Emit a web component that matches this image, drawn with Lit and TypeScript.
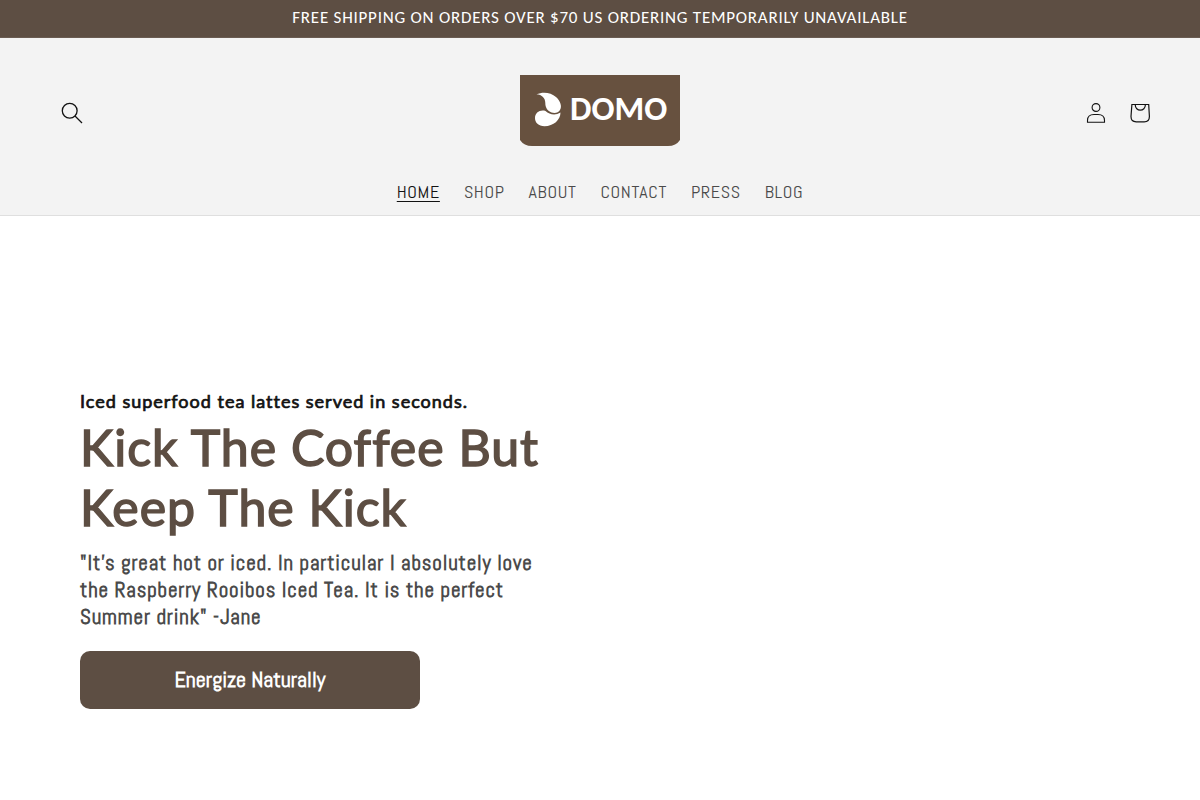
import { LitElement, html, css } from "lit";
import { customElement } from "lit/decorators.js";
import { classMap } from "lit/directives/class-map.js";

const LINKS = ["HOME", "SHOP", "ABOUT", "CONTACT", "PRESS", "BLOG"];

@customElement("app-root")
export class AppRoot extends LitElement {
  static styles = css`
    :host {
      display: block;
      min-height: 100vh;
      background: #fff;
      color: #121212;
      font-family: Abel, "Roboto Condensed", sans-serif;
    }
    .announcement {
      padding: 7px 20px 9px;
      border-bottom: 1px solid #6a5c52;
      background: #5d4e43;
      color: #fff;
      text-align: center;
    }
    .announcement-text {
      margin: 0;
      font: 400 17px/21px Carlito, Lato, sans-serif;
      letter-spacing: 0.045em;
    }
    .header {
      display: grid;
      grid-template-columns: 1fr auto 1fr;
      align-items: center;
      padding: 37px 38px 5px 50px;
      border-bottom: 1px solid #dfdfdf;
      background: #f3f3f3;
    }
    .icon-button {
      display: flex;
      align-items: center;
      justify-content: center;
      width: 44px;
      height: 44px;
      padding: 0;
      border: 0;
      background: none;
      color: #121212;
    }
    .tools {
      display: flex;
      justify-content: flex-end;
    }
    .search {
      display: flex;
    }
    .logo {
      display: block;
      margin-left: -12px;
      padding-bottom: 5px;
    }
    .logo svg {
      display: block;
    }
    .nav {
      grid-column: 1 / -1;
      margin-top: 22px;
      margin-left: -12px;
    }
    .links {
      display: flex;
      flex-wrap: wrap;
      justify-content: center;
      gap: 24px;
      margin: 0;
      padding: 7px 0;
      list-style: none;
    }
    .link {
      display: block;
      color: #4a4a4a;
      font-size: 18px;
      line-height: 23px;
      letter-spacing: 0.035em;
      text-decoration: none;
    }
    .current {
      color: #121212;
      text-decoration: underline;
      text-underline-offset: 3px;
    }
    .hero {
      padding: 173px 80px 80px;
    }
    .hero-box {
      max-width: 480px;
    }
    .kicker {
      margin: 0;
      font: 400 18px/24px Lato, sans-serif;
      letter-spacing: 1px;
      -webkit-text-stroke: 0.04em currentColor;
    }
    .title {
      margin: 4px 0 12px;
      color: #5d4e43;
      font: 400 50px/60px Lato, sans-serif;
      letter-spacing: 1px;
      -webkit-text-stroke: 0.03em currentColor;
    }
    .quote {
      margin: 0 0 21px;
      color: #4a4a4a;
      font-size: 21px;
      font-weight: 700;
      line-height: 27px;
      letter-spacing: 0.04em;
    }
    .cta {
      display: block;
      max-width: 340px;
      padding: 14px 0 16px;
      border-radius: 10px;
      background: #5d4e43;
      color: #fff;
      font-size: 22px;
      font-weight: 700;
      line-height: 28px;
      text-align: center;
      text-decoration: none;
    }
  `;

  render() {
    return html`
      <div class="announcement" role="region" aria-label="Announcement">
        <p class="announcement-text">FREE SHIPPING ON ORDERS OVER $70 US ORDERING TEMPORARILY UNAVAILABLE</p>
      </div>
      <header class="header">
        <div class="search">
          <button class="icon-button" type="button" aria-label="Search">
            <svg width="22" height="22" viewBox="0 0 22 22" fill="none" stroke="currentColor" stroke-width="1.3">
              <circle cx="8.7" cy="8.7" r="7.4" />
              <path d="M14 14l7 7" />
            </svg>
          </button>
        </div>
        <a class="logo" href="#" aria-label="Domo">
          <svg width="160" height="71" viewBox="0 0 160 71">
            <path d="M0 0h160v65q-4 6-12 6H12Q4 71 0 65z" fill="#67513f" />
            <path d="M16.500 19.300C23 16.500 31 17.500 36 22C40.500 26 42.200 31.500 40 35C38.500 38 34.500 38.500 31.500 37.500C27.500 36 25.300 32.500 25.300 28C25.300 23 22 19.800 16.500 19.300z" fill="#fff" />
            <path d="M25.500 36C29.500 39.800 35.500 40.800 40.500 37.600C40.500 45 33.500 51.300 24.500 51.300C18.500 51.300 15 47.500 15 43.300C15 37.500 20 34.500 25.500 36z" fill="#fff" />
            <text x="50" y="45" fill="#fff" font-family="Carlito, Lato, sans-serif" font-size="34" font-weight="700">DOMO</text>
          </svg>
        </a>
        <div class="tools">
          <button class="icon-button" type="button" aria-label="Log in">
            <svg width="20" height="20" viewBox="0 0 20 20" fill="none" stroke="currentColor" stroke-width="1.1">
              <circle cx="10" cy="4.500" r="3.900" />
              <path d="M1.500 19.200v-1.700q0-6 6.500-6h4q6.500 0 6.500 6v1.700z" />
            </svg>
          </button>
          <button class="icon-button" type="button" aria-label="Cart">
            <svg width="20" height="20" viewBox="0 0 20 20" fill="none" stroke="currentColor" stroke-width="1.200">
              <path d="M1.900 1.500h16.800l.7 12q0 5.300-5.200 5.300H6.200q-5.200 0-5.200-5.300zM5.300 1.500v.7a5 5 0 0 0 10 0v-.7" />
            </svg>
          </button>
        </div>
        <nav class="nav" aria-label="Main">
          <ul class="links">
            ${LINKS.map(
              (name, i) => html`<li><a class=${classMap({ link: true, current: i === 0 })} href="#">${name}</a></li>`
            )}
          </ul>
        </nav>
      </header>
      <main class="hero">
        <div class="hero-box">
          <p class="kicker">Iced superfood tea lattes served in seconds.</p>
          <h1 class="title">Kick The Coffee But Keep The Kick</h1>
          <p class="quote">
            "It's great hot or iced. In particular I absolutely love the Raspberry Rooibos Iced Tea. It is the perfect
            Summer drink" -Jane
          </p>
          <a class="cta" href="#">Energize Naturally</a>
        </div>
      </main>
    `;
  }
}
